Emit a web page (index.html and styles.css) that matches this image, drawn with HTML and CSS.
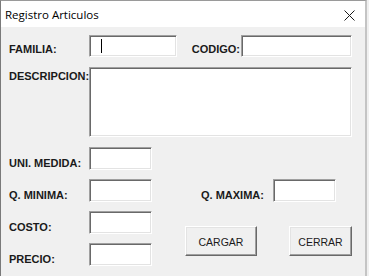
FILE: index.html
```html
<!DOCTYPE html>
<html lang="es">
<head>
  <meta charset="UTF-8">
  <meta name="viewport" content="width=device-width, initial-scale=1.0">
  <title>Registro Articulos</title>
  <link rel="stylesheet" href="styles.css">
</head>
<body>
  <div class="window">
    <div class="titlebar">
      <span class="title">Registro Articulos</span>
      <svg class="close" width="11" height="11" viewBox="0 0 11 11">
        <path d="M0.5 0.5 L10.5 10.5 M10.5 0.5 L0.5 10.5" stroke="#1a1a1a" stroke-width="1" fill="none"/>
      </svg>
    </div>

    <div class="form">
      <div class="row row-top">
        <label class="lbl lbl-top">FAMILIA:</label>
        <div class="field f-familia"><span class="caret"></span></div>
        <label class="lbl lbl-top lbl-codigo">CODIGO:</label>
        <div class="field f-codigo"></div>
      </div>

      <div class="row row-desc">
        <label class="lbl lbl-desc">DESCRIPCION:</label>
        <div class="field f-desc"></div>
      </div>

      <div class="lower">
        <label class="lbl">UNI. MEDIDA:</label>
        <div class="field"></div>

        <label class="lbl">Q. MINIMA:</label>
        <div class="field"></div>
        <div class="max-cell">
          <label class="lbl lbl-max">Q. MAXIMA:</label>
          <div class="field f-max"></div>
        </div>

        <label class="lbl">COSTO:</label>
        <div class="field"></div>

        <label class="lbl lbl-r4">PRECIO:</label>
        <div class="field f-r4"></div>

        <div class="buttons">
          <button class="btn btn-cargar">CARGAR</button>
          <button class="btn btn-cerrar">CERRAR</button>
        </div>
      </div>
    </div>
  </div>
</body>
</html>
```

FILE: styles.css
```css
body {
  margin: 0;
  background: #f0f0f0;
  font-family: "Liberation Sans", Arial, sans-serif;
}
.window {
  width: 367px;
  height: 276px;
  box-sizing: border-box;
  border-left: 1px solid #7a7a7a;
  border-top: 1px solid #9a9a9a;
  border-right: 2px solid #c4c4c4;
  background: #f0f0f0;
}
.titlebar {
  height: 26px;
  background: #fff;
  display: flex;
  align-items: center;
  padding-left: 4px;
  padding-right: 10px;
}
.title {
  font-family: "Open Sans", "Noto Sans", sans-serif;
  font-size: 11.5px;
  color: #000;
  flex: 1;
  margin-top: 1px;
}
.close {
  margin-top: 2px;
}
.form {
  padding: 8px 0 0 8px;
}
.row {
  display: flex;
  align-items: flex-start;
}
.lbl {
  font-weight: bold;
  font-size: 11px;
  color: #1a1a1a;
  line-height: 13px;
  white-space: nowrap;
}
.field {
  background: #fff;
  box-sizing: border-box;
  border: 1px solid;
  border-color: #a0a0a0 #fff #fff #a0a0a0;
  box-shadow: inset 1px 1px #696969, inset -1px -1px #e3e3e3;
}
.lbl-top {
  width: 80px;
  margin-top: 8px;
}
.f-familia {
  width: 88px;
  height: 22px;
  display: flex;
  align-items: center;
  padding-left: 11px;
}
.caret {
  width: 1px;
  height: 14px;
  background: #000;
}
.lbl-codigo {
  width: 64px;
  text-align: right;
  padding-right: 1px;
  box-sizing: border-box;
}
.f-codigo {
  width: 111px;
  height: 22px;
}
.row-desc {
  margin-top: 10px;
}
.lbl-desc {
  width: 80px;
  margin-top: 3px;
}
.f-desc {
  width: 263px;
  height: 70px;
}
.lower {
  margin-top: 10px;
  display: grid;
  grid-template-columns: 80px 63px auto;
  grid-template-rows: repeat(4, 23px);
  row-gap: 9px;
}
.lower > .lbl {
  grid-column: 1;
  margin-top: 10px;
}
.lower > .field {
  grid-column: 2;
}
.max-cell {
  grid-column: 3;
  grid-row: 2;
  display: flex;
  padding-left: 49px;
}
.lbl-max {
  width: 72px;
  margin-top: 10px;
}
.f-max {
  width: 63px;
  height: 23px;
}
.lbl-r4 {
  grid-row: 4;
}
.f-r4 {
  grid-row: 4;
}
.buttons {
  grid-column: 3;
  grid-row: 3 / 5;
  align-self: end;
  margin-bottom: 10px;
  display: flex;
  gap: 32px;
  padding-left: 33px;
}
.btn {
  height: 30px;
  box-sizing: border-box;
  background: #f0f0f0;
  border: 1px solid;
  border-color: #fff #696969 #696969 #fff;
  box-shadow: inset -1px -1px #a0a0a0, inset 1px 1px #e3e3e3;
  font-family: "Liberation Sans", Arial, sans-serif;
  font-size: 10.5px;
  color: #1a1a1a;
  padding: 2px 0 0;
}
.btn-cargar {
  width: 72px;
}
.btn-cerrar {
  width: 63px;
}
```
